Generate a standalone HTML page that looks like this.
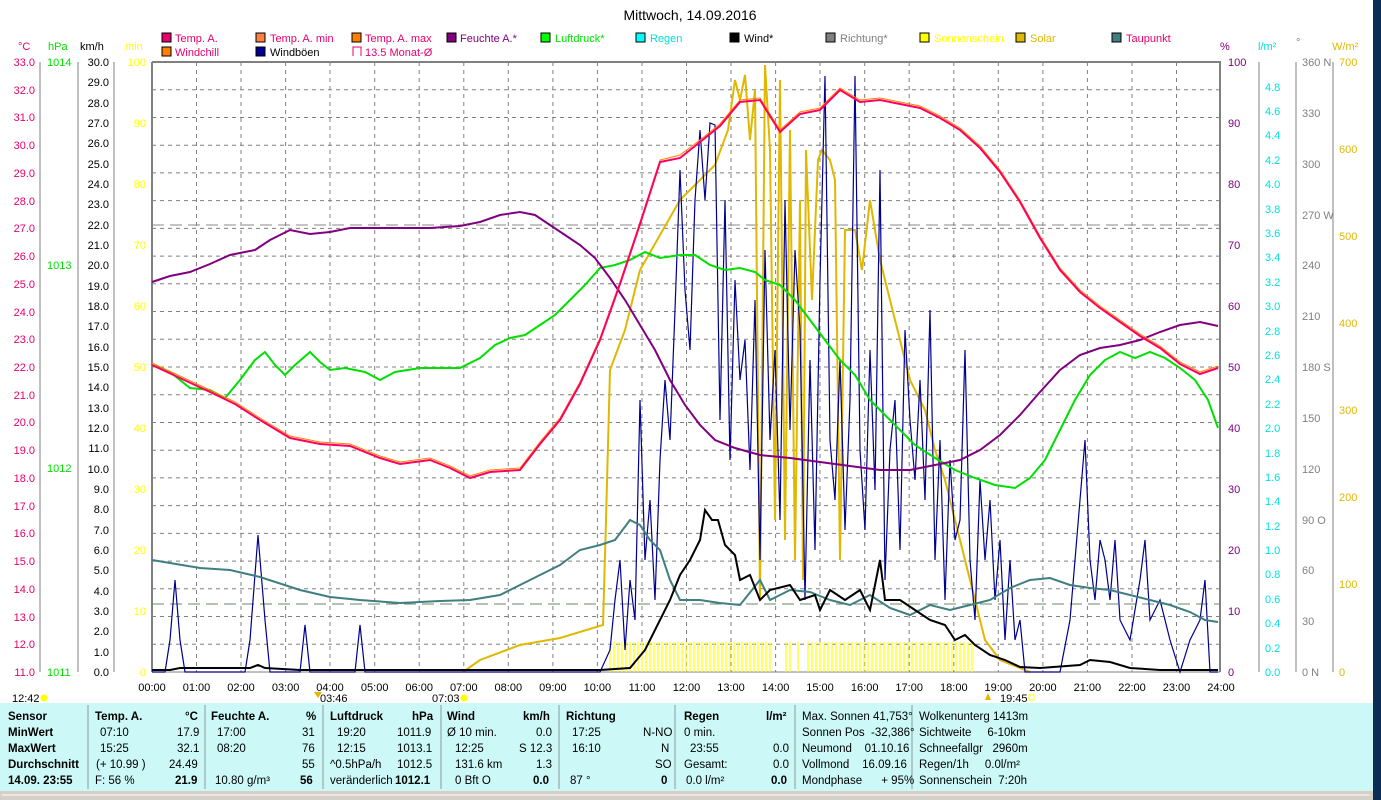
<!DOCTYPE html>
<html><head><meta charset="utf-8">
<style>
body{margin:0;width:1381px;height:800px;overflow:hidden;background:#fff;font-family:"Liberation Sans",sans-serif;position:relative}
svg{position:absolute;left:0;top:0}
.f{position:absolute;font-size:11.5px;white-space:nowrap;color:#000}
.b{font-weight:bold}
.r{text-align:right}
</style></head><body>
<svg width="1381" height="800" viewBox="0 0 1381 800" font-family="Liberation Sans, sans-serif" font-size="11">
<rect x="1373" y="0" width="8" height="800" fill="#0b2d55"/>
<text x="690" y="20" font-size="14" text-anchor="middle">Mittwoch, 14.09.2016</text>
<!-- legend -->
<g font-size="11">
<rect x="162" y="33" width="9" height="9" fill="#e8006c" stroke="#000"/><text x="175" y="42" fill="#e8006c">Temp. A.</text>
<rect x="256" y="33" width="9" height="9" fill="#ff8040" stroke="#000"/><text x="270" y="42" fill="#e8006c">Temp. A. min</text>
<rect x="352" y="33" width="9" height="9" fill="#ff8000" stroke="#000"/><text x="365" y="42" fill="#e8006c">Temp. A. max</text>
<rect x="447" y="33" width="9" height="9" fill="#800080" stroke="#000"/><text x="460" y="42" fill="#800080">Feuchte A.*</text>
<rect x="541" y="33" width="9" height="9" fill="#00ff00" stroke="#000"/><text x="555" y="42" fill="#00e000">Luftdruck*</text>
<rect x="636" y="33" width="9" height="9" fill="#00ffff" stroke="#000"/><text x="650" y="42" fill="#00e0e0">Regen</text>
<rect x="730" y="33" width="9" height="9" fill="#000" stroke="#000"/><text x="744" y="42">Wind*</text>
<rect x="826" y="33" width="9" height="9" fill="#808080" stroke="#000"/><text x="840" y="42" fill="#808080">Richtung*</text>
<rect x="920" y="33" width="9" height="9" fill="#ffff00" stroke="#000"/><text x="934" y="42" fill="#ffff00">Sonnenschein</text>
<rect x="1016" y="33" width="9" height="9" fill="#e0b800" stroke="#000"/><text x="1030" y="42" fill="#e0b800">Solar</text>
<rect x="1112" y="33" width="9" height="9" fill="#3f7f7f" stroke="#000"/><text x="1126" y="42" fill="#e8006c">Taupunkt</text>
<rect x="162" y="47" width="9" height="9" fill="#ff8000" stroke="#000"/><text x="175" y="56" fill="#e8006c">Windchill</text>
<rect x="256" y="47" width="9" height="9" fill="#000090" stroke="#000"/><text x="270" y="56">Windböen</text>
<path d="M353 56V47h8v9" fill="none" stroke="#e8006c"/><text x="365" y="56" fill="#e8006c">13.5 Monat-Ø</text>
</g>
<!-- axis headers -->
<text x="18" y="50" fill="#e8006c">°C</text><text x="48" y="50" fill="#00e000">hPa</text><text x="80" y="50">km/h</text><text x="125" y="50" fill="#ffff00">min</text>
<text x="1220" y="50" fill="#800080">%</text><text x="1258" y="50" fill="#00e0e0">l/m²</text><text x="1296" y="46" fill="#808080">°</text><text x="1332" y="50" fill="#e0b800">W/m²</text>
<!-- grid -->
<g stroke="#808080" stroke-dasharray="4,4" stroke-width="1">
<path d="M152 89.7H1220M152 117.5H1220M152 145.2H1220M152 172.9H1220M152 200.6H1220M152 228.4H1220M152 256.1H1220M152 283.8H1220M152 311.5H1220M152 339.3H1220M152 367H1220M152 394.7H1220M152 422.5H1220M152 450.2H1220M152 477.9H1220M152 505.6H1220M152 533.4H1220M152 561.1H1220M152 588.8H1220M152 616.5H1220M152 644.3H1220"/>
<path d="M196.5 62V672M241 62V672M285.6 62V672M330 62V672M374.7 62V672M419.2 62V672M463.8 62V672M508.3 62V672M552.9 62V672M597.4 62V672M642 62V672M686.5 62V672M731 62V672M775.6 62V672M820 62V672M864.7 62V672M909.2 62V672M953.8 62V672M998.3 62V672M1042.9 62V672M1087.4 62V672M1132 62V672M1176.5 62V672"/>
</g>
<path d="M152 225H1220" stroke="#888" stroke-dasharray="12,6"/>
<path d="M152 604H1220" stroke="#6a8a6a" stroke-dasharray="12,6"/>
<!-- plot border -->
<path d="M152 62H1220V672" fill="none" stroke="#808080" stroke-width="2"/>
<path d="M152 62V672" stroke="#808080" stroke-width="2"/>
<path d="M152 672H1220" stroke="#808080"/>
<!-- axis lines -->
<g stroke="#808080"><path d="M40 62V672M78 62V672M114 62V672M1259 62V672M1296 62V672M1333 62V672"/></g>
<!-- left labels -->
<g fill="#e8006c" text-anchor="end">
<text x="35" y="66">33.0</text><text x="35" y="94">32.0</text><text x="35" y="121">31.0</text><text x="35" y="149">30.0</text><text x="35" y="177">29.0</text><text x="35" y="205">28.0</text><text x="35" y="232">27.0</text><text x="35" y="260">26.0</text><text x="35" y="288">25.0</text><text x="35" y="316">24.0</text><text x="35" y="343">23.0</text><text x="35" y="371">22.0</text><text x="35" y="399">21.0</text><text x="35" y="426">20.0</text><text x="35" y="454">19.0</text><text x="35" y="482">18.0</text><text x="35" y="510">17.0</text><text x="35" y="537">16.0</text><text x="35" y="565">15.0</text><text x="35" y="593">14.0</text><text x="35" y="621">13.0</text><text x="35" y="648">12.0</text><text x="35" y="676">11.0</text>
</g>
<g fill="#00e000"><text x="47" y="66">1014</text><text x="47" y="269">1013</text><text x="47" y="472">1012</text><text x="47" y="676">1011</text></g>
<g text-anchor="end">
<text x="109" y="66">30.0</text><text x="109" y="86">29.0</text><text x="109" y="107">28.0</text><text x="109" y="127">27.0</text><text x="109" y="147">26.0</text><text x="109" y="168">25.0</text><text x="109" y="188">24.0</text><text x="109" y="208">23.0</text><text x="109" y="229">22.0</text><text x="109" y="249">21.0</text><text x="109" y="269">20.0</text><text x="109" y="290">19.0</text><text x="109" y="310">18.0</text><text x="109" y="330">17.0</text><text x="109" y="351">16.0</text><text x="109" y="371">15.0</text><text x="109" y="391">14.0</text><text x="109" y="412">13.0</text><text x="109" y="432">12.0</text><text x="109" y="452">11.0</text><text x="109" y="473">10.0</text><text x="109" y="493">9.0</text><text x="109" y="513">8.0</text><text x="109" y="534">7.0</text><text x="109" y="554">6.0</text><text x="109" y="574">5.0</text><text x="109" y="595">4.0</text><text x="109" y="615">3.0</text><text x="109" y="635">2.0</text><text x="109" y="656">1.0</text><text x="109" y="676">0.0</text>
</g>
<g fill="#ffff00" stroke="none" text-anchor="end" style="paint-order:stroke">
<text x="146" y="66">100</text><text x="146" y="127">90</text><text x="146" y="188">80</text><text x="146" y="249">70</text><text x="146" y="310">60</text><text x="146" y="371">50</text><text x="146" y="432">40</text><text x="146" y="493">30</text><text x="146" y="554">20</text><text x="146" y="615">10</text><text x="146" y="676">0</text>
</g>
<!-- right labels -->
<g fill="#800080">
<text x="1228" y="66">100</text><text x="1228" y="127">90</text><text x="1228" y="188">80</text><text x="1228" y="249">70</text><text x="1228" y="310">60</text><text x="1228" y="371">50</text><text x="1228" y="432">40</text><text x="1228" y="493">30</text><text x="1228" y="554">20</text><text x="1228" y="615">10</text><text x="1228" y="676">0</text>
</g>
<g fill="#00e0e0">
<text x="1265" y="91">4.8</text><text x="1265" y="115">4.6</text><text x="1265" y="139">4.4</text><text x="1265" y="164">4.2</text><text x="1265" y="188">4.0</text><text x="1265" y="213">3.8</text><text x="1265" y="237">3.6</text><text x="1265" y="261">3.4</text><text x="1265" y="286">3.2</text><text x="1265" y="310">3.0</text><text x="1265" y="335">2.8</text><text x="1265" y="359">2.6</text><text x="1265" y="383">2.4</text><text x="1265" y="408">2.2</text><text x="1265" y="432">2.0</text><text x="1265" y="457">1.8</text><text x="1265" y="481">1.6</text><text x="1265" y="505">1.4</text><text x="1265" y="530">1.2</text><text x="1265" y="554">1.0</text><text x="1265" y="578">0.8</text><text x="1265" y="603">0.6</text><text x="1265" y="627">0.4</text><text x="1265" y="652">0.2</text><text x="1265" y="676">0.0</text>
</g>
<g fill="#808080">
<text x="1302" y="66">360 N</text><text x="1302" y="117">330</text><text x="1302" y="168">300</text><text x="1302" y="219">270 W</text><text x="1302" y="269">240</text><text x="1302" y="320">210</text><text x="1302" y="371">180 S</text><text x="1302" y="422">150</text><text x="1302" y="473">120</text><text x="1302" y="524">90 O</text><text x="1302" y="574">60</text><text x="1302" y="625">30</text><text x="1302" y="676">0 N</text>
</g>
<g fill="#e0b800">
<text x="1339" y="66">700</text><text x="1339" y="153">600</text><text x="1339" y="240">500</text><text x="1339" y="327">400</text><text x="1339" y="414">300</text><text x="1339" y="501">200</text><text x="1339" y="588">100</text><text x="1339" y="676">0</text>
</g>
<!-- sunshine bars -->
<g stroke="#ffff00" stroke-width="1.2">
<path d="M610 642V672M614 642V672M618 642V672M622 642V672M626 642V672M630 642V672M634 642V672M638 642V672M642 642V672M646 642V672M650 642V672M654 642V672M658 642V672M662 642V672M666 642V672M670 642V672M674 642V672M678 642V672M682 642V672M686 642V672M690 642V672M694 642V672M698 642V672M702 642V672M706 642V672M710 642V672M714 642V672M718 642V672M722 642V672M726 642V672M730 642V672M734 642V672M738 642V672M742 642V672M746 642V672M750 642V672M754 642V672M758 642V672M762 642V672M766 642V672M770 642V672M786 642V672M790 642V672M798 642V672M808 642V672M812 642V672M816 642V672M820 642V672M824 642V672M828 642V672M832 642V672M836 642V672M840 642V672M844 642V672M848 642V672M852 642V672M856 642V672M860 642V672M864 642V672M868 642V672M872 642V672M876 642V672M880 642V672M884 642V672M888 642V672M892 642V672M896 642V672M900 642V672M904 642V672M908 642V672M912 642V672M916 642V672M920 642V672M924 642V672M928 642V672M932 642V672M936 642V672M940 642V672M944 642V672M948 642V672M952 642V672M956 642V672M960 642V672M964 642V672M968 642V672M972 642V672"/>
</g>
<!-- solar -->
<polyline fill="none" stroke="#e0b800" stroke-width="2" points="463,672 480,660 520,645 560,638 603,625 606,520 610,370 625,330 640,270 660,235 680,200 700,180 715,165 728,130 735,80 740,100 745,75 750,140 755,90 760,600 765,65 770,150 775,520 780,80 785,540 790,130 795,560 800,200 803,580 806,150 812,300 818,160 822,150 830,160 835,180 840,560 845,230 855,230 862,270 870,200 880,260 890,300 900,340 910,380 925,410 935,450 945,480 955,520 965,560 975,600 985,640 1000,660 1030,672"/>
<!-- gusts -->
<polyline fill="none" stroke="#000090" stroke-width="1.2" points="152,672 165,672 170,640 175,580 180,640 185,672 245,672 250,640 258,535 265,620 270,672 300,672 305,625 310,672 355,672 360,625 365,672 600,672 610,650 615,600 620,560 625,650 630,580 635,620 640,400 645,560 650,500 655,600 660,460 665,380 670,440 675,310 680,170 685,290 690,350 695,200 700,130 705,200 710,123 715,125 720,420 725,200 730,460 735,280 740,380 745,340 750,470 755,300 760,560 765,250 770,440 775,350 780,520 785,200 790,430 795,250 800,330 805,600 810,360 815,550 820,280 825,76 830,440 835,500 840,360 845,530 850,400 855,76 860,450 865,530 870,350 875,490 880,170 885,580 890,450 895,400 900,550 905,330 910,420 915,480 920,380 925,500 930,310 935,560 940,440 945,600 950,460 955,540 960,520 965,350 970,560 975,620 980,480 985,560 990,500 995,600 1000,540 1005,640 1010,560 1015,640 1020,620 1025,672 1060,672 1070,620 1080,500 1085,440 1090,560 1095,600 1100,540 1105,560 1110,600 1115,540 1120,620 1130,640 1140,580 1145,540 1150,620 1160,600 1170,640 1180,672 1190,640 1200,620 1205,580 1210,672 1218,672"/>
<!-- dewpoint -->
<polyline fill="none" stroke="#3f7f7f" stroke-width="2" points="152,560 170,563 200,568 230,570 260,577 300,590 330,597 360,600 400,603 440,601 470,600 500,595 520,585 540,575 560,565 580,550 600,545 615,540 630,520 640,525 650,540 660,550 670,580 680,600 700,600 720,603 740,605 760,580 770,600 790,590 810,592 830,600 850,605 870,595 890,608 910,615 930,605 950,610 970,605 990,600 1010,588 1030,580 1050,578 1070,585 1090,588 1110,590 1130,595 1150,600 1170,605 1190,612 1205,620 1218,622"/>
<!-- wind -->
<polyline fill="none" stroke="#000" stroke-width="2" points="152,670 170,670 180,668 250,668 258,665 265,668 300,670 600,670 630,668 645,650 660,620 670,600 680,575 690,560 700,540 705,510 712,520 718,520 725,545 735,555 740,580 750,575 760,600 770,590 790,585 800,600 815,595 820,610 830,590 845,600 860,590 870,610 880,560 885,600 900,600 915,610 930,620 945,625 955,640 965,635 975,645 990,655 1005,660 1020,667 1040,668 1080,665 1090,660 1110,662 1130,668 1160,670 1218,670"/>
<!-- pressure -->
<polyline fill="none" stroke="#00e000" stroke-width="2" points="152,365 170,372 190,388 210,390 225,398 240,380 255,360 265,352 275,365 285,375 295,365 310,352 320,362 330,370 345,368 365,372 380,380 395,372 420,368 440,368 460,368 480,358 495,345 510,338 525,335 540,325 555,315 570,300 585,285 600,268 615,265 630,260 645,252 660,258 680,255 695,255 710,265 725,270 740,268 755,272 765,280 780,285 795,300 810,320 825,340 840,360 855,375 870,400 885,415 900,430 915,445 935,458 955,470 975,478 995,485 1015,488 1030,478 1045,460 1060,430 1075,400 1090,375 1105,360 1120,352 1135,358 1150,352 1165,358 1180,368 1195,380 1208,400 1218,428"/>
<!-- humidity -->
<polyline fill="none" stroke="#800080" stroke-width="2" points="152,282 170,276 190,272 210,264 230,255 255,250 270,240 290,230 310,234 330,232 350,228 370,228 400,228 430,228 460,226 480,222 500,215 520,212 535,215 550,225 565,235 580,245 595,258 610,278 625,300 640,325 655,350 670,380 685,405 700,425 715,440 735,448 760,455 790,458 820,462 850,466 880,470 910,470 935,465 960,460 980,450 1000,435 1020,415 1040,392 1060,370 1080,355 1100,348 1120,345 1140,340 1160,332 1180,325 1200,322 1218,326"/>
<!-- temp -->
<polyline fill="none" stroke="#ff8000" stroke-width="1" points="152,363 180,376 210,390 235,402 260,418 290,436 320,442 350,444 380,456 400,462 430,458 450,466 470,476 490,470 520,468 540,442 560,418 580,382 600,338 620,282 640,222 660,160 680,155 700,140 720,124 740,100 760,98 780,130 800,112 820,108 840,88 860,100 880,98 900,102 920,106 940,116 960,128 980,146 1000,170 1020,200 1040,236 1060,268 1080,290 1100,306 1120,320 1140,334 1160,346 1180,362 1200,372 1218,366"/>
<polyline fill="none" stroke="#ff0060" stroke-width="2" points="152,365 180,378 210,392 235,404 260,420 290,438 320,444 350,446 380,458 400,464 430,460 450,468 470,478 490,472 520,470 540,444 560,420 580,384 600,340 620,284 640,224 660,162 680,158 700,142 720,126 740,102 760,100 780,132 800,114 820,110 840,90 860,102 880,100 900,104 920,108 940,118 960,130 980,148 1000,172 1020,202 1040,238 1060,270 1080,292 1100,308 1120,322 1140,336 1160,348 1180,364 1200,374 1218,368"/>
<!-- time labels -->
<g text-anchor="middle">
<text x="152" y="691">00:00</text><text x="196.5" y="691">01:00</text><text x="241" y="691">02:00</text><text x="285.6" y="691">03:00</text><text x="330" y="691">04:00</text><text x="374.7" y="691">05:00</text><text x="419.2" y="691">06:00</text><text x="463.8" y="691">07:00</text><text x="508.3" y="691">08:00</text><text x="552.9" y="691">09:00</text><text x="597.4" y="691">10:00</text><text x="642" y="691">11:00</text><text x="686.5" y="691">12:00</text><text x="731" y="691">13:00</text><text x="775.6" y="691">14:00</text><text x="820" y="691">15:00</text><text x="864.7" y="691">16:00</text><text x="909.2" y="691">17:00</text><text x="953.8" y="691">18:00</text><text x="998.3" y="691">19:00</text><text x="1042.9" y="691">20:00</text><text x="1087.4" y="691">21:00</text><text x="1132" y="691">22:00</text><text x="1176.5" y="691">23:00</text><text x="1221" y="691">24:00</text>
</g>
<text x="12" y="702">12:42</text><circle cx="44" cy="698" r="3.5" fill="#ffff00"/>
<text x="320" y="702">03:46</text><path d="M314 692l4 6 4-6z" fill="#e0b800"/>
<text x="432" y="702">07:03</text><circle cx="464" cy="698" r="3.5" fill="#ffff00"/>
<text x="1000" y="702">19:45</text><path d="M985 700l3-7 3 7z" fill="#e0b800"/><rect x="1029" y="695" width="5" height="5" fill="none" stroke="#ffff00"/>
<!-- footer panel -->
<rect x="0" y="703" width="1373" height="88" fill="#ccf8f8"/>
<g stroke="#8a9a9a"><path d="M88 705V789M205 705V789M323 705V789M441 705V789M559 705V789M675 705V789M795 705V789M912 705V789"/></g>
<rect x="0" y="791" width="1373" height="9" fill="#d4d0c8"/>
<path d="M2 795H1370" stroke="#fff"/>
</svg>
<!-- footer text -->
<div class="f b" style="left:8px;top:711px">Sensor</div>
<div class="f b" style="left:8px;top:727px">MinWert</div>
<div class="f b" style="left:8px;top:743px">MaxWert</div>
<div class="f b" style="left:8px;top:759px">Durchschnitt</div>
<div class="f b" style="left:8px;top:775px">14.09. 23:55</div>

<div class="f b" style="left:95px;top:711px">Temp. A.</div><div class="f b" style="left:185px;top:711px">°C</div>
<div class="f" style="left:100px;top:727px">07:10</div><div class="f" style="left:177px;top:727px">17.9</div>
<div class="f" style="left:100px;top:743px">15:25</div><div class="f" style="left:177px;top:743px">32.1</div>
<div class="f" style="left:96px;top:759px">(+ 10.99 )</div><div class="f" style="left:169px;top:759px">24.49</div>
<div class="f" style="left:95px;top:775px">F: 56 %</div><div class="f b" style="left:175px;top:775px">21.9</div>

<div class="f b" style="left:211px;top:711px">Feuchte A.</div><div class="f b" style="left:306px;top:711px">%</div>
<div class="f" style="left:217px;top:727px">17:00</div><div class="f" style="left:302px;top:727px">31</div>
<div class="f" style="left:217px;top:743px">08:20</div><div class="f" style="left:302px;top:743px">76</div>
<div class="f" style="left:302px;top:759px">55</div>
<div class="f" style="left:215px;top:775px">10.80 g/m³</div><div class="f b" style="left:300px;top:775px">56</div>

<div class="f b" style="left:330px;top:711px">Luftdruck</div><div class="f b" style="left:412px;top:711px">hPa</div>
<div class="f" style="left:337px;top:727px">19:20</div><div class="f" style="left:397px;top:727px">1011.9</div>
<div class="f" style="left:337px;top:743px">12:15</div><div class="f" style="left:397px;top:743px">1013.1</div>
<div class="f" style="left:330px;top:759px">^0.5hPa/h</div><div class="f" style="left:397px;top:759px">1012.5</div>
<div class="f" style="left:330px;top:775px">veränderlich</div><div class="f b" style="left:395px;top:775px">1012.1</div>

<div class="f b" style="left:447px;top:711px">Wind</div><div class="f b" style="left:523px;top:711px">km/h</div>
<div class="f" style="left:447px;top:727px">Ø 10 min.</div><div class="f" style="left:536px;top:727px">0.0</div>
<div class="f" style="left:455px;top:743px">12:25</div><div class="f" style="left:519px;top:743px">S 12.3</div>
<div class="f" style="left:455px;top:759px">131.6 km</div><div class="f" style="left:536px;top:759px">1.3</div>
<div class="f" style="left:455px;top:775px">0 Bft O</div><div class="f b" style="left:533px;top:775px">0.0</div>

<div class="f b" style="left:566px;top:711px">Richtung</div>
<div class="f" style="left:572px;top:727px">17:25</div><div class="f" style="left:643px;top:727px">N-NO</div>
<div class="f" style="left:572px;top:743px">16:10</div><div class="f" style="left:661px;top:743px">N</div>
<div class="f" style="left:655px;top:759px">SO</div>
<div class="f" style="left:570px;top:775px">87 °</div><div class="f b" style="left:661px;top:775px">0</div>

<div class="f b" style="left:684px;top:711px">Regen</div><div class="f b" style="left:766px;top:711px">l/m²</div>
<div class="f" style="left:684px;top:727px">0 min.</div>
<div class="f" style="left:690px;top:743px">23:55</div><div class="f" style="left:773px;top:743px">0.0</div>
<div class="f" style="left:684px;top:759px">Gesamt:</div><div class="f" style="left:773px;top:759px">0.0</div>
<div class="f" style="left:686px;top:775px">0.0 l/m²</div><div class="f b" style="left:771px;top:775px">0.0</div>

<div class="f" style="left:802px;top:711px">Max. Sonnen 41,753°</div>
<div class="f" style="left:802px;top:727px">Sonnen Pos&nbsp; -32,386°</div>
<div class="f" style="left:802px;top:743px">Neumond&nbsp;&nbsp;&nbsp; 01.10.16</div>
<div class="f" style="left:802px;top:759px">Vollmond&nbsp;&nbsp;&nbsp; 16.09.16</div>
<div class="f" style="left:802px;top:775px">Mondphase&nbsp;&nbsp;&nbsp;&nbsp;&nbsp; + 95%</div>

<div class="f" style="left:919px;top:711px">Wolkenunterg 1413m</div>
<div class="f" style="left:919px;top:727px">Sichtweite&nbsp;&nbsp;&nbsp;&nbsp; 6-10km</div>
<div class="f" style="left:919px;top:743px">Schneefallgr&nbsp;&nbsp; 2960m</div>
<div class="f" style="left:919px;top:759px">Regen/1h&nbsp;&nbsp;&nbsp;&nbsp; 0.0l/m²</div>
<div class="f" style="left:919px;top:775px">Sonnenschein&nbsp; 7:20h</div>
</body></html>
